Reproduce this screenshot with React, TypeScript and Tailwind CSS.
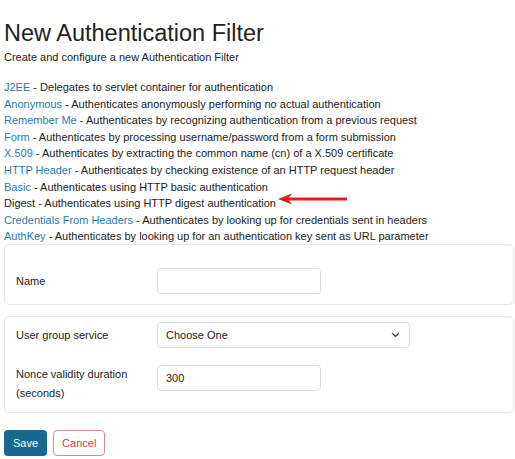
import React from "react";

const filters: { name: string; desc: string; link: boolean }[] = [
  { name: "J2EE", desc: "Delegates to servlet container for authentication", link: true },
  { name: "Anonymous", desc: "Authenticates anonymously performing no actual authentication", link: true },
  { name: "Remember Me", desc: "Authenticates by recognizing authentication from a previous request", link: true },
  { name: "Form", desc: "Authenticates by processing username/password from a form submission", link: true },
  { name: "X.509", desc: "Authenticates by extracting the common name (cn) of a X.509 certificate", link: true },
  { name: "HTTP Header", desc: "Authenticates by checking existence of an HTTP request header", link: true },
  { name: "Basic", desc: "Authenticates using HTTP basic authentication", link: true },
  { name: "Digest", desc: "Authenticates using HTTP digest authentication", link: false },
  { name: "Credentials From Headers", desc: "Authenticates by looking up for credentials sent in headers", link: true },
  { name: "AuthKey", desc: "Authenticates by looking up for an authentication key sent as URL parameter", link: true },
];

function Arrow() {
  return (
    <svg width="70" height="12" viewBox="0 0 70 12" className="absolute left-[274px] top-[-2px]">
      <path d="M0 6 L14 0.5 L11 4.6 L69 4.6 L69 7.4 L11 7.4 L14 11.5 Z" fill="#e0201c" />
    </svg>
  );
}

export default function App() {
  return (
    <div
      className="w-[515px] h-[459px] bg-white text-[#222] overflow-hidden"
      style={{ fontFamily: '"Liberation Sans", Arial, sans-serif' }}
    >
      <div className="pl-[4px] pt-[18px]">
        <h1 className="text-[23.5px] leading-[30px] text-[#222]">New Authentication Filter</h1>
        <p className="mt-[1px] text-[11px] leading-[16px]">Create and configure a new Authentication Filter</p>

        <ul className="mt-[14px] text-[11px] leading-[16.6px]">
          {filters.map((f) => (
            <li key={f.name} className="relative whitespace-nowrap">
              <span className={f.link ? "text-[#1f7bb0]" : ""}>{f.name}</span> - {f.desc}
              {f.name === "Digest" && <Arrow />}
            </li>
          ))}
        </ul>

        <div className="-mt-[1px] w-[510px] rounded-[5px] border border-[#e6e6e6] pt-[23px] pb-[10px]">
          <div className="flex items-center">
            <label className="w-[152px] pl-[11px] text-[11px]">Name</label>
            <input className="w-[164px] h-[26px] rounded-[4px] border border-[#dddddd] px-[8px] text-[11px] outline-none" />
          </div>
        </div>

        <div className="mt-[11px] w-[510px] rounded-[5px] border border-[#e6e6e6] pt-[5px] pb-[9px]">
          <div className="flex items-center">
            <label className="w-[152px] pl-[11px] text-[11px]">User group service</label>
            <div className="w-[253px] h-[26px] rounded-[4px] border border-[#dddddd] pl-[8px] pr-[9px] flex items-center justify-between text-[11px]">
              <span>Choose One</span>
              <svg width="9" height="6" viewBox="0 0 9 6">
                <path d="M1 1 L4.5 4.5 L8 1" fill="none" stroke="#444" strokeWidth="1.3" />
              </svg>
            </div>
          </div>
          <div className="flex items-start mt-[17px]">
            <label className="w-[152px] pl-[11px] text-[11px] leading-[19px]">
              Nonce validity duration
              <br />
              (seconds)
            </label>
            <input
              defaultValue="300"
              className="w-[164px] h-[26px] rounded-[4px] border border-[#dddddd] px-[8px] text-[11px] outline-none"
            />
          </div>
        </div>

        <div className="mt-[17px] flex gap-[6px]">
          <button className="h-[26px] px-[9px] rounded-[4px] bg-[#17698f] text-white text-[11px]">Save</button>
          <button className="h-[26px] px-[8px] rounded-[4px] border border-[#e08a8a] text-[#d23b3b] text-[11px]">Cancel</button>
        </div>
      </div>
    </div>
  );
}
